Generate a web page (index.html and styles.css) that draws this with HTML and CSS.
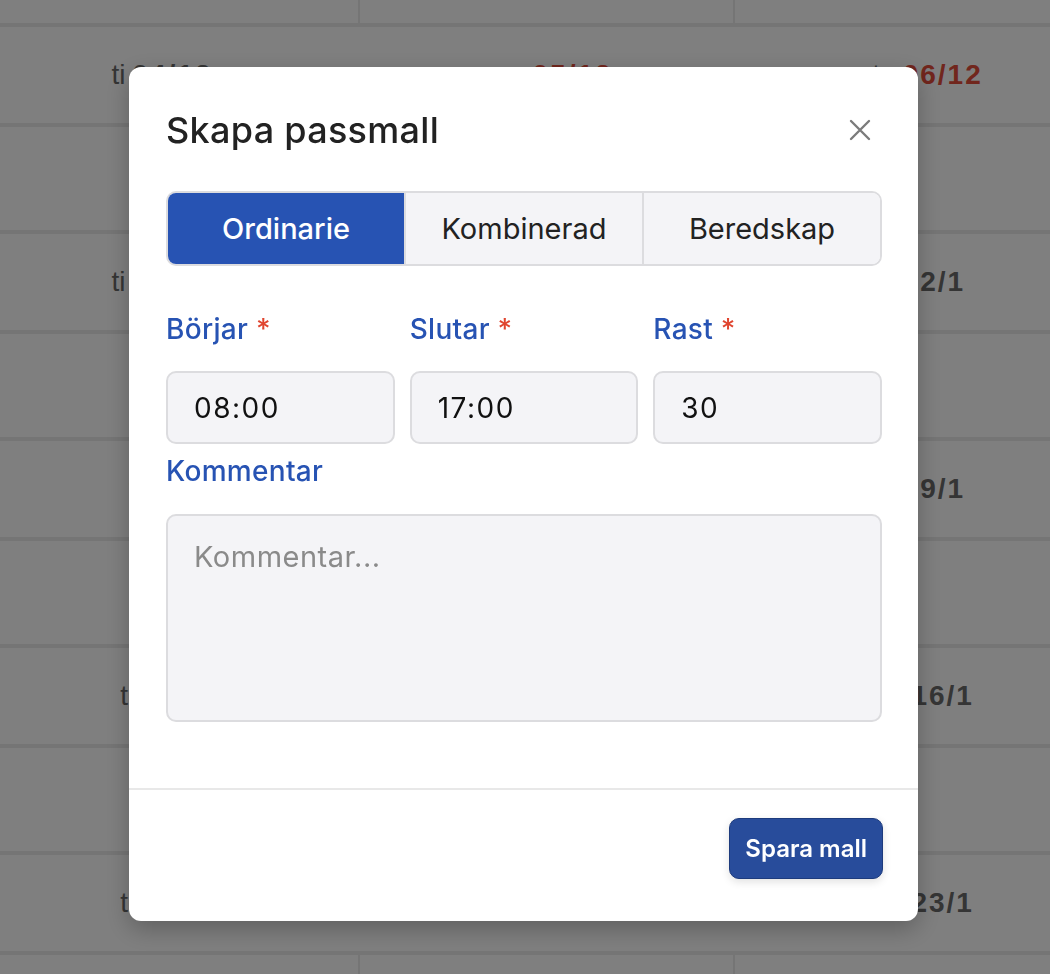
FILE: index.html
```html
<!DOCTYPE html>
<html lang="sv">
<head>
    <meta charset="UTF-8">
    <meta name="viewport" content="width=device-width, initial-scale=1.0">
    <title>Skapa passmall</title>
    <link rel="stylesheet" href="styles.css">
</head>
<body>
    <div class="schedule">
        <div class="week-row top"><div class="cell"></div><div class="cell"></div><div class="cell"></div></div>

        <div class="date-row">
            <div class="date first">ti <b>04/12</b></div>
            <div class="date second red">on <b>05/12</b></div>
            <div class="date third">to <b class="red">06/12</b></div>
        </div>
        <div class="week-row"><div class="cell"></div><div class="cell"></div><div class="cell"></div></div>

        <div class="date-row">
            <div class="date first">ti <b>31/12</b></div>
            <div class="date second">on <b>1/1</b></div>
            <div class="date third">to <b>2/1</b></div>
        </div>
        <div class="week-row"><div class="cell"></div><div class="cell"></div><div class="cell"></div></div>

        <div class="date-row">
            <div class="date first">ti <b>7/1</b></div>
            <div class="date second">on <b>8/1</b></div>
            <div class="date third">to <b>9/1</b></div>
        </div>
        <div class="week-row"><div class="cell"></div><div class="cell"></div><div class="cell"></div></div>

        <div class="date-row">
            <div class="date first">ti <b>14/1</b></div>
            <div class="date second">on <b>15/1</b></div>
            <div class="date third">to <b>16/1</b></div>
        </div>
        <div class="week-row"><div class="cell"></div><div class="cell"></div><div class="cell"></div></div>

        <div class="date-row">
            <div class="date first">ti <b>21/1</b></div>
            <div class="date second">on <b>22/1</b></div>
            <div class="date third">to <b>23/1</b></div>
        </div>
        <div class="week-row"><div class="cell"></div><div class="cell"></div><div class="cell"></div></div>
    </div>

    <div class="overlay">
        <div class="modal">
            <div class="modal-header">
                <h2 class="modal-title">Skapa passmall</h2>
                <button class="close-button" aria-label="Stäng">
                    <svg width="22" height="22" viewBox="0 0 22 22">
                        <path d="M2 2 L20 20 M20 2 L2 20" stroke="#7b7b7b" stroke-width="2.4" stroke-linecap="round" fill="none"/>
                    </svg>
                </button>
            </div>

            <div class="modal-body">
                <div class="tabs">
                    <button class="tab active">Ordinarie</button>
                    <button class="tab">Kombinerad</button>
                    <button class="tab">Beredskap</button>
                </div>

                <div class="time-fields">
                    <div class="field">
                        <label class="field-label">Börjar <span class="required">*</span></label>
                        <input class="field-input" type="text" value="08:00">
                    </div>
                    <div class="field">
                        <label class="field-label">Slutar <span class="required">*</span></label>
                        <input class="field-input" type="text" value="17:00">
                    </div>
                    <div class="field">
                        <label class="field-label">Rast <span class="required">*</span></label>
                        <input class="field-input" type="text" value="30">
                    </div>
                </div>

                <label class="field-label comment-label">Kommentar</label>
                <textarea class="comment" placeholder="Kommentar..."></textarea>
            </div>

            <div class="modal-footer">
                <button class="save-button">Spara mall</button>
            </div>
        </div>
    </div>
</body>
</html>
```

FILE: styles.css
```css
body {
    margin: 0;
    font-family: 'Liberation Sans', Arial, sans-serif;
    background-color: #ffffff;
    overflow: hidden;
}

/* background schedule */
.schedule {
    width: 1050px;
    height: 974px;
    overflow: hidden;
}
.week-row,
.date-row {
    display: grid;
    grid-template-columns: 360px 375px 1fr;
    border-bottom: 4px solid #ebebeb;
    box-sizing: border-box;
}
.week-row {
    height: 107px;
}
.week-row.top {
    height: 27px;
}
.cell {
    border-right: 2px solid #ebebeb;
}
.cell:last-child {
    border-right: none;
}
.date-row {
    height: 100px;
}
.date {
    display: flex;
    align-items: center;
    justify-content: center;
    font-size: 28px;
    color: #6a6a6a;
}
.date b {
    margin-left: 7px;
    letter-spacing: 2px;
}
.date.first {
    padding-right: 36px;
}
.date.second {
    padding-left: 12px;
}
.date.third {
    padding-left: 70px;
}
.red,
.date.red {
    color: #e24c3a;
}

/* modal */
.overlay {
    position: fixed;
    inset: 0;
    background: rgba(0, 0, 0, 0.5);
    display: flex;
    justify-content: center;
    align-items: flex-start;
    padding-top: 67px;
    font-family: 'Inter', 'Noto Sans', sans-serif;
}
.modal {
    width: 789px;
    margin-left: -3px;
    background: #ffffff;
    border-radius: 12px;
    box-shadow: 0 8px 24px rgba(0, 0, 0, 0.25);
}
.modal-header {
    display: flex;
    justify-content: space-between;
    align-items: center;
    padding: 43px 47px 0 37px;
}
.modal-title {
    margin: 0;
    font-size: 36px;
    line-height: 40px;
    font-weight: 500;
    letter-spacing: 0.3px;
    color: #222222;
}
.close-button {
    border: none;
    background: none;
    padding: 0;
    width: 22px;
    height: 22px;
    cursor: pointer;
}
.modal-body {
    padding: 41px 36px 66px 37px;
}
.tabs {
    display: flex;
    height: 75px;
    border: 2px solid #dcdcdf;
    border-radius: 10px;
    overflow: hidden;
    box-sizing: border-box;
}
.tab {
    flex: 1;
    border: none;
    border-left: 2px solid #dcdcdf;
    background: #f4f4f7;
    font-family: inherit;
    font-size: 29px;
    color: #222222;
    cursor: pointer;
}
.tab:first-child {
    border-left: none;
}
.tab.active {
    background: #2753b3;
    color: #ffffff;
    font-weight: 500;
}
.time-fields {
    display: grid;
    grid-template-columns: 1fr 1fr 1fr;
    gap: 15px;
    margin-top: 47px;
}
.field-label {
    display: block;
    font-size: 28px;
    line-height: 32px;
    font-weight: 500;
    letter-spacing: 0.3px;
    color: #2753b3;
}
.required {
    color: #e0452f;
}
.field-input {
    display: block;
    width: 100%;
    height: 73px;
    margin-top: 26px;
    box-sizing: border-box;
    border: 2px solid #dcdcdf;
    border-radius: 10px;
    background: #f4f4f7;
    padding: 0 26px;
    font-family: inherit;
    font-size: 28px;
    letter-spacing: 1.5px;
    color: #111111;
}
.comment-label {
    margin-top: 11px;
}
.comment {
    display: block;
    width: 100%;
    height: 208px;
    margin-top: 27px;
    box-sizing: border-box;
    border: 2px solid #dcdcdf;
    border-radius: 10px;
    background: #f4f4f7;
    padding: 24px 26px;
    font-family: inherit;
    font-size: 29px;
    line-height: 34px;
    letter-spacing: 0.5px;
    resize: none;
}
.comment::placeholder {
    color: #8a8a8a;
}
.modal-footer {
    display: flex;
    justify-content: flex-end;
    border-top: 2px solid #e8e8e8;
    padding: 28px 35px 42px;
}
.save-button {
    height: 61px;
    padding: 0 15px;
    background: #284c9b;
    border: 1px solid #1d3b7d;
    border-radius: 10px;
    box-shadow: 0 3px 8px rgba(0, 0, 0, 0.12);
    font-family: inherit;
    font-size: 24px;
    font-weight: 600;
    color: #ffffff;
    cursor: pointer;
}
```
